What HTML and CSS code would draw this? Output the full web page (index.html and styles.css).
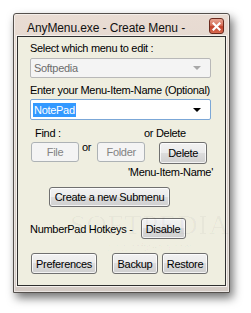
FILE: index.html
```html
<!DOCTYPE html>
<html>
<head>
<meta charset="utf-8">
<link rel="stylesheet" href="styles.css">
</head>
<body>
<div class="window">
  <div class="titlebar">
    <span class="title">AnyMenu.exe - Create Menu -</span>
    <span class="close"><svg width="9" height="9" viewBox="0 0 9 9"><path d="M1.5 1.5 L7.5 7.5 M7.5 1.5 L1.5 7.5" stroke="#fff" stroke-width="2.2" stroke-linecap="square"/></svg></span>
  </div>
  <div class="client">
    <div class="label l1">Select which menu to edit :</div>
    <div class="combo disabled"><span>Softpedia</span><i class="arrow"></i></div>
    <div class="label l2">Enter your Menu-Item-Name (Optional)</div>
    <div class="combo edit"><span class="sel">NotePad</span><i class="arrow"></i></div>
    <div class="findrow"><span class="find">Find :</span><span class="ordel">or Delete</span></div>
    <div class="btnrow">
      <button class="btn off w-file">File</button>
      <span class="or">or</span>
      <button class="btn off w-folder">Folder</button>
      <button class="btn w-delete">Delete</button>
    </div>
    <div class="min">'Menu-Item-Name'</div>
    <button class="btn w-create">Create a new Submenu</button>
    <div class="hotrow"><span>NumberPad Hotkeys -</span><button class="btn w-disable">Disable</button></div>
    <div class="bottom">
      <button class="btn w-pref">Preferences</button>
      <button class="btn w-backup">Backup</button>
      <button class="btn w-restore">Restore</button>
    </div>
    <div class="wm"><div class="wm1">SOFTPEDIA<sup>™</sup></div><div class="wm2">www.softpedia.com</div></div>
  </div>
</div>
</body>
</html>
```
FILE: styles.css
```css
html, body { margin: 0; padding: 0; background: #fff; }
body { width: 251px; height: 313px; overflow: hidden; font-family: "Liberation Sans", Arial, sans-serif; }
.window {
  margin: 13px 0 0 13px;
  width: 209px;
  height: 272px;
  border: 1px solid #55504c;
  border-radius: 3px 3px 0 0;
  background: linear-gradient(180deg, #e9dcd3 0%, #ddd2ca 40%, #d4cbc5 100%);
  box-shadow: 3px 5px 10px rgba(0,0,0,0.55), inset 0 0 0 1px rgba(255,255,255,0.5);
  padding: 0 3px 6px 3px;
  box-sizing: content-box;
  display: flex;
  flex-direction: column;
}
.titlebar { height: 22px; display: flex; align-items: center; position: relative; flex: none; }
.title { font-size: 12px; color: #111; margin-left: 10px; margin-top: 6px; letter-spacing: -0.1px; }
.close {
  position: absolute; right: 2px; top: 4px;
  width: 13px; height: 14px;
  border: 1px solid #6b2a1e; border-radius: 3px;
  background: linear-gradient(180deg, #e8a593 0%, #d6705a 45%, #c0412a 55%, #d86a4f 100%);
  display: flex; align-items: center; justify-content: center;
}
.client {
  flex: 1;
  border: 1px solid #2f2f2f;
  box-shadow: 0 0 0 1px #f4f0ec;
  background: #efeee0;
  position: relative;
  padding: 0 14px 0 12px;
  font-size: 11px;
  letter-spacing: -0.3px;
  color: #000;
}
.label { line-height: 14px; white-space: nowrap; }
.l1 { margin-top: 4px; }
.combo {
  height: 18px; border: 1px solid #adb2b5; border-radius: 2px;
  display: flex; align-items: center; justify-content: space-between;
  padding: 0 3px 0 3px; margin-top: 3px;
}
.combo.disabled { background: #f4f4f4; color: #6d6d6d; border-color: #b8b8b8; }
.combo.disabled .arrow { border-top-color: #a8a8a8; }
.combo.edit { background: #fff; border-color: #7ba7d7; height: 19px; margin-top: 2px; padding-left: 2px; }
.l2 { margin-top: 5px; }
.sel { background: #3399ff; color: #fff; padding: 0 1px; line-height: 14px; }
.arrow { width: 0; height: 0; border-left: 4px solid transparent; border-right: 4px solid transparent; border-top: 4px solid #000; margin-right: 6px; }
.findrow { position: relative; height: 14px; margin-top: 6px; line-height: 14px; }
.find { position: absolute; left: 5px; }
.ordel { position: absolute; left: 114px; }
.btnrow { display: flex; align-items: flex-start; margin-top: 0; height: 25px; }
.btn {
  font-family: inherit; font-size: 11px; letter-spacing: -0.3px; color: #000;
  height: 21px; padding: 0; margin: 0; white-space: nowrap;
  border: 1px solid #707070; border-radius: 3px;
  background: linear-gradient(180deg, #f2f2f2 0%, #ebebeb 49%, #dddddd 50%, #cfcfcf 100%);
  box-shadow: inset 0 0 0 1px rgba(255,255,255,0.75);
}
.btn.off { border-color: #adb2b5; background: #f4f4f4; color: #838383; box-shadow: none; }
.w-file { width: 48px; height: 20px; margin-left: 1px; margin-top: 2px; }
.or { margin: 0 4px 0 3px; line-height: 14px; }
.w-folder { width: 48px; height: 20px; margin-left: 2px; margin-top: 2px; }
.w-delete { width: 48px; height: 22px; margin-left: 14px; margin-top: 2px; }
.min { margin-top: 0; margin-left: 98px; line-height: 14px; white-space: nowrap; }
.w-create { display: block; width: 121px; height: 20px; margin: 8px 0 0 19px; }
.hotrow { display: flex; align-items: center; margin-top: 11px; }
.hotrow span { margin-top: 1px; }
.w-disable { width: 45px; margin-left: 8px; }
.bottom { display: flex; margin-top: 14px; }
.w-pref { width: 66px; margin-left: 1px; }
.w-backup { width: 46px; margin-left: 15px; }
.w-restore { width: 46px; margin-left: 4px; }
.wm { position: absolute; left: 52px; top: 174px; color: rgba(0,0,0,0.035); pointer-events: none; text-align: center; letter-spacing: 0; }
.wm1 { font-family: "Liberation Serif", serif; font-size: 28px; letter-spacing: 1px; line-height: 28px; }
.wm1 sup { font-size: 8px; vertical-align: top; }
.wm2 { font-size: 10px; margin-top: 3px; margin-left: -10px; }
```
